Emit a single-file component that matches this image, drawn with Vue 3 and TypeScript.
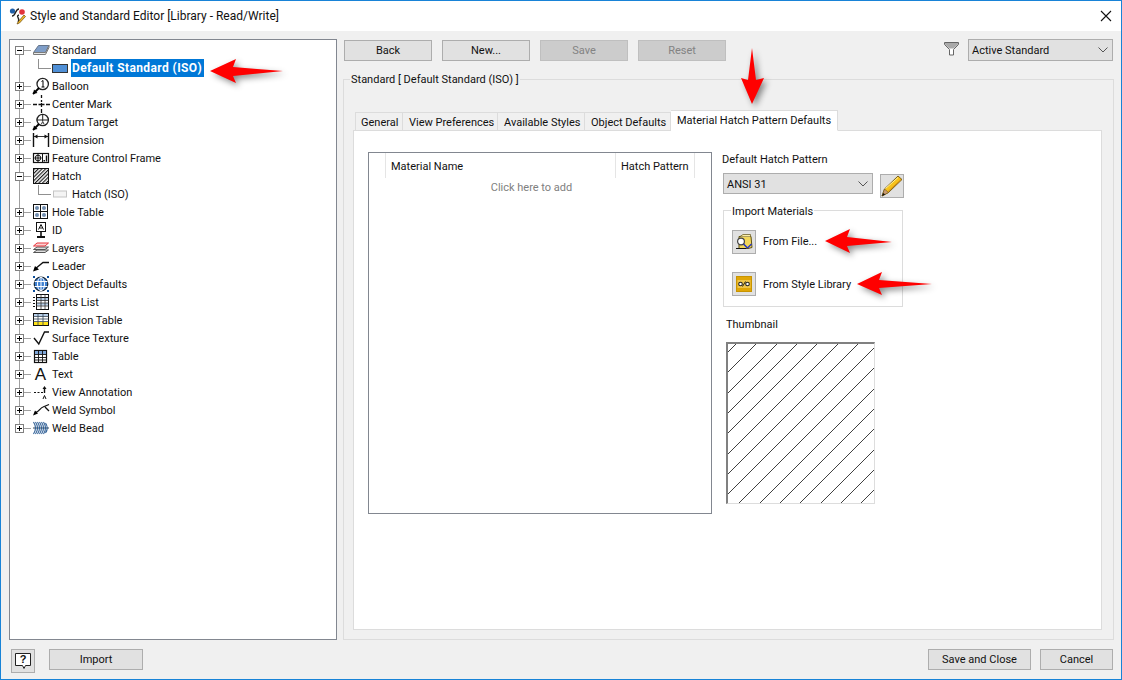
<script setup lang="ts">
interface TreeRow {
  label: string;
  icon: string;
  level?: number;
  toggle?: "plus" | "minus";
  selected?: boolean;
}

const icons: Record<string, string> = {
  standard: `<path d="M1.5 11.5 6.5 4.5H17L13.5 11.5Z" fill="#7f9ec8" stroke="#64748a"/><path d="M1.5 11.5V13.5H13.5L17 6.5V4.5L13.5 11.5Z" fill="#e8e8e8" stroke="#7a7a7a"/>`,
  block: `<rect x="0.5" y="5.5" width="15" height="8" fill="#4f8fd6" stroke="#333"/>`,
  balloon: `<circle cx="10.7" cy="7" r="5.7" fill="#fff" stroke="#222" stroke-width="1.3"/><path d="M7 11 1 17" stroke="#000" stroke-width="1.8"/><path d="M1 17 2 12.5 5.5 16Z" fill="#000"/><path d="M9.5 4.5 11 3.5V10M9.5 10H12.5" fill="none" stroke="#000"/>`,
  center: `<path d="M1 9.5H5M6.5 9.5H12.5M14 9.5H18M9.5 0V3M9.5 5V7M9.5 8V12M9.5 14V18" stroke="#111" stroke-width="1.3"/>`,
  datum: `<circle cx="10.7" cy="7" r="5.7" fill="#fff" stroke="#222" stroke-width="1.3"/><path d="M4.5 7H17M10.7 1V8" stroke="#222"/><path d="M7 11 1 17" stroke="#000" stroke-width="1.8"/><path d="M1 17 2 12.5 5.5 16Z" fill="#000"/><path d="M9.5 11 10.7 8.5 12 11" fill="none" stroke="#333"/>`,
  dimension: `<path d="M1.5 2V16M16.5 2V16" stroke="#111" stroke-width="1.4"/><path d="M2 5.5H16" stroke="#333"/><path d="M2 5.5 5.5 3.5V7.5ZM16 5.5 12.5 3.5V7.5Z" fill="#111"/>`,
  frame: `<rect x="1.5" y="4.5" width="15" height="9" fill="#fff" stroke="#111" stroke-width="1.2"/><path d="M10.5 4.5V13.5" stroke="#111"/><circle cx="6" cy="9" r="2.8" fill="none" stroke="#111"/><path d="M2.5 9H9.5M6 5V13" stroke="#111"/><rect x="11.5" y="11" width="1.5" height="1.5" fill="#111"/><path d="M14.5 6.5V12.5" stroke="#111" stroke-width="1.4"/>`,
  hatch: `<defs><pattern id="tree-hatch" width="2.6" height="2.6" patternUnits="userSpaceOnUse" patternTransform="rotate(45)"><rect width="1.2" height="2.6" fill="#222"/></pattern></defs><rect x="1.5" y="1.5" width="15" height="15" fill="url(#tree-hatch)" stroke="#111"/>`,
  hatchItem: `<rect x="1.5" y="6" width="13" height="6" fill="#f4f4f4" stroke="#c4c4c4"/>`,
  hole: `<rect x="1.5" y="1.5" width="14" height="14" fill="#fff" stroke="#111"/><path d="M8.5 1.5V15.5M1.5 8.5H15.5" stroke="#111"/><circle cx="5" cy="5" r="2" fill="#6f8cae"/><circle cx="12" cy="5" r="2" fill="#6f8cae"/><circle cx="5" cy="12" r="2" fill="#6f8cae"/><circle cx="12" cy="12" r="2" fill="#6f8cae"/>`,
  id: `<rect x="4.5" y="1.5" width="9" height="9" fill="#fff" stroke="#111"/><path d="M6.5 8.5 9 3.5 11.5 8.5M7.5 7H10.5" fill="none" stroke="#111"/><path d="M9 11V15" stroke="#111" stroke-width="1.6"/><path d="M5 16H13" stroke="#111" stroke-width="2"/>`,
  layers: `<path d="M1.5 13.5 5 11H16.5L13 13.5Z" fill="#ddd" stroke="#555"/><path d="M1.5 10.5 5 8H16.5L13 10.5Z" fill="#ddd" stroke="#555"/><path d="M1.5 7 5 4H16.5L13 7Z" fill="#fbd3d3" stroke="#e8343c"/>`,
  leader: `<path d="M3 12 11 5.5H17" fill="none" stroke="#111" stroke-width="1.3"/><path d="M1 14.5 3 9 7 12.5Z" fill="#000"/>`,
  globe: `<circle cx="9" cy="9" r="6.8" fill="#3d7fd1" stroke="#123" stroke-width="1.2"/><path d="M2.5 6.5H15.5M2.5 11.5H15.5M9 2.2V15.8" stroke="#fff"/><ellipse cx="9" cy="9" rx="3.5" ry="6.8" fill="none" stroke="#fff"/><path d="M1 1h2v2H1zM15 1h2v2h-2zM1 15h2v2H1zM15 15h2v2h-2z" fill="#0b4f9e"/>`,
  parts: `<rect x="4.5" y="1.5" width="12" height="15" fill="#fff" stroke="#111"/><path d="M4.5 4.5H16.5" stroke="#111"/><rect x="5" y="5" width="11" height="2.5" fill="#b8d0ea"/><rect x="5" y="10" width="11" height="2.5" fill="#b8d0ea"/><path d="M4.5 7.5H16.5M4.5 10H16.5M4.5 13H16.5M9 1.5V16.5M13 1.5V16.5" stroke="#333" stroke-width="0.8"/><path d="M1 4.5H3M1 7.5H3M1 10.5H3M1 13.5H3" stroke="#111"/>`,
  revision: `<rect x="1.5" y="2.5" width="15" height="12" fill="#fff" stroke="#111"/><rect x="2" y="11" width="14" height="3" fill="#ffe21a"/><rect x="2" y="3" width="14" height="2" fill="#b8d0ea"/><path d="M1.5 5.5H16.5M1.5 8H16.5M1.5 10.5H16.5M6 2.5V14.5M11 2.5V14.5" stroke="#345" stroke-width="0.8"/>`,
  surface: `<path d="M2 9 6.8 15 12.5 3H17" fill="none" stroke="#111" stroke-width="1.4"/>`,
  table: `<rect x="2.5" y="3.5" width="12" height="12" fill="#fff" stroke="#111" stroke-width="1.2"/><rect x="3" y="4" width="11" height="3" fill="#7ea6d8"/><path d="M3 7.5H14.5M3 10.5H14.5M3 13H14.5M6.5 3.5V15.5M10.5 3.5V15.5" stroke="#111" stroke-width="0.9"/>`,
  text: `<text x="8.5" y="15" text-anchor="middle" font-family="Liberation Sans, sans-serif" font-size="17" fill="#111">A</text>`,
  annotation: `<path d="M2 9.5H4M5.5 9.5H7.5M9 9.5H11" stroke="#111"/><path d="M12.5 10V5" stroke="#111" stroke-width="1.4"/><path d="M12.5 3 10.5 6H14.5Z" fill="#111"/><path d="M11 16 12.5 12.5 14 16" fill="none" stroke="#111"/>`,
  weld: `<path d="M3 12C7 11 8 7 11 6L17 3.5M13 6 17 10" fill="none" stroke="#111" stroke-width="1.3"/><path d="M1 14.5 3 9.5 6 12.5Z" fill="#000"/>`,
  bead: `<path d="M1 9H17" stroke="#345"/><path d="M1.5 3Q5.5 9 1.5 15M3.5 3Q7.5 9 3.5 15M5.5 3Q9.5 9 5.5 15M7.5 3Q11.5 9 7.5 15M9.5 3Q13.5 9 9.5 15M11.5 3Q15.5 9 11.5 15M13.5 4Q17 9 13.5 14" fill="none" stroke="#2f5f96" stroke-width="1.1"/>`,
};

const rows: TreeRow[] = [
  { label: "Standard", icon: "standard", toggle: "minus" },
  { label: "Default Standard (ISO)", icon: "block", level: 1, selected: true },
  { label: "Balloon", icon: "balloon", toggle: "plus" },
  { label: "Center Mark", icon: "center", toggle: "plus" },
  { label: "Datum Target", icon: "datum", toggle: "plus" },
  { label: "Dimension", icon: "dimension", toggle: "plus" },
  { label: "Feature Control Frame", icon: "frame", toggle: "plus" },
  { label: "Hatch", icon: "hatch", toggle: "minus" },
  { label: "Hatch (ISO)", icon: "hatchItem", level: 1 },
  { label: "Hole Table", icon: "hole", toggle: "plus" },
  { label: "ID", icon: "id", toggle: "plus" },
  { label: "Layers", icon: "layers", toggle: "plus" },
  { label: "Leader", icon: "leader", toggle: "plus" },
  { label: "Object Defaults", icon: "globe", toggle: "plus" },
  { label: "Parts List", icon: "parts", toggle: "plus" },
  { label: "Revision Table", icon: "revision", toggle: "plus" },
  { label: "Surface Texture", icon: "surface", toggle: "plus" },
  { label: "Table", icon: "table", toggle: "plus" },
  { label: "Text", icon: "text", toggle: "plus" },
  { label: "View Annotation", icon: "annotation", toggle: "plus" },
  { label: "Weld Symbol", icon: "weld", toggle: "plus" },
  { label: "Weld Bead", icon: "bead", toggle: "plus" },
];

const tabs = ["General", "View Preferences", "Available Styles", "Object Defaults", "Material Hatch Pattern Defaults"];

// 45 degree lines of the thumbnail, about 20px apart
const hatchLines = Array.from({ length: 15 }, (_, i) => Math.round(8 + i * 20.3));

const arrows = [
  "M210 71 236 59 233 67 283 71 233 76 236 83Z",
  "M752 104 741 78 748 80 752 48 756 80 764 78Z",
  "M825 241 850 229 847 237 892 242 847 246 850 253Z",
  "M857 284 882 272 879 280 932 284 879 288 882 295Z",
];
</script>

<template>
  <div class="window">
    <header class="titlebar">
      <svg class="app-icon" width="18" height="18" viewBox="0 0 18 18">
        <circle cx="3.5" cy="4" r="2.6" fill="#1f5fa8" />
        <circle cx="13" cy="5" r="2.8" fill="#e2343c" />
        <path d="M3 9C7 9 6 2 10 2M10 8C6 9 12 12 9 15" fill="none" stroke="#222" stroke-width="1.4" />
        <path d="M15 8 9 15 8 17 10.5 16 16.5 9.5Z" fill="#f1b928" stroke="#6a4a10" stroke-width="0.7" />
      </svg>
      <span class="title">Style and Standard Editor [Library - Read/Write]</span>
      <svg class="close" width="12" height="12" viewBox="0 0 12 12">
        <path d="M1 1 11 11M11 1 1 11" stroke="#111" stroke-width="1.1" />
      </svg>
    </header>

    <div class="body">
      <div class="tree">
        <div
          v-for="(row, i) in rows"
          :key="row.label"
          class="row"
          :class="{ child: row.level, first: i === 0, last: i === rows.length - 1 }"
        >
          <span class="toggle-cell">
            <span v-if="row.toggle" class="toggle" :class="row.toggle"></span>
          </span>
          <svg class="row-icon" width="18" height="18" viewBox="0 0 18 18" v-html="icons[row.icon]"></svg>
          <span class="row-label" :class="{ selected: row.selected }">{{ row.label }}</span>
        </div>
      </div>

      <div class="editor">
        <div class="toolbar">
          <button class="btn wide">Back</button>
          <button class="btn wide">New...</button>
          <button class="btn wide disabled">Save</button>
          <button class="btn wide disabled">Reset</button>
          <svg class="funnel" width="15" height="14" viewBox="0 0 15 14">
            <path d="M.5.5H14.5V2.5L9.5 7.5V13H5.5V7.5L.5 2.5Z" fill="#fff" stroke="#666" />
            <path d="M1 1H14V2.5L9.5 6.5H5.5L1 2.5Z" fill="#a9a9a9" />
          </svg>
          <div class="combo filter-combo">
            <span>Active Standard</span>
            <svg width="10" height="6" viewBox="0 0 10 6"><path d="M.5.5 5 5 9.5.5" fill="none" stroke="#555" /></svg>
          </div>
        </div>

        <fieldset class="group">
          <legend>Standard [ Default Standard (ISO) ]</legend>
          <div class="tabs">
            <div
              v-for="(tab, i) in tabs"
              :key="tab"
              class="tab"
              :class="{ active: i === tabs.length - 1 }"
            >{{ tab }}</div>
          </div>

          <div class="tab-panel">
            <div class="materials">
              <div class="materials-head">
                <div class="col col-mark"></div>
                <div class="col col-name">Material Name</div>
                <div class="col col-pattern">Hatch Pattern</div>
              </div>
              <div class="add-row">Click here to add</div>
            </div>

            <div class="side">
              <div class="side-label">Default Hatch Pattern</div>
              <div class="pattern-row">
                <div class="combo pattern-combo">
                  <span>ANSI 31</span>
                  <svg width="10" height="6" viewBox="0 0 10 6"><path d="M.5.5 5 5 9.5.5" fill="none" stroke="#555" /></svg>
                </div>
                <button class="icon-btn pencil">
                  <svg width="22" height="22" viewBox="0 0 22 22">
                    <path d="M17 1 21 4.5 7.5 17.5 1 21 3.5 14Z" fill="#f6c21c" stroke="#6e5410" stroke-width="0.9" />
                    <path d="M3.5 14 7.5 17.5 1 21Z" fill="#c99a72" stroke="#6e5410" stroke-width="0.6" />
                    <path d="M2.2 18 1 21 4.2 19.6Z" fill="#111" />
                    <path d="M4.5 13.5 17 2.5" stroke="#fff2a0" />
                    <path d="M7 16.5 20 4.5" stroke="#d98f10" />
                  </svg>
                </button>
              </div>

              <fieldset class="import">
                <legend>Import Materials</legend>
                <div class="import-row">
                  <button class="icon-btn">
                    <svg width="18" height="18" viewBox="0 0 18 18">
                      <path d="M4 3.5H16L17 14.5 13 15.5H4Z" fill="#f2d75a" stroke="#5e5014" />
                      <path d="M5 3.5 8 1.5H15.5V3.5" fill="#fbeea8" stroke="#5e5014" stroke-width="0.7" />
                      <circle cx="6" cy="8.5" r="3.4" fill="#fff" stroke="#444" stroke-width="1.2" />
                      <path d="M8.5 11 12.5 15" stroke="#1d2fc4" stroke-width="1.5" />
                      <path d="M12.5 15 16.5 11" stroke="#1d2fc4" stroke-width="1.2" />
                      <path d="M1 15.5H11" stroke="#111" />
                    </svg>
                  </button>
                  <span>From File...</span>
                </div>
                <div class="import-row">
                  <button class="icon-btn">
                    <svg width="16" height="16" viewBox="0 0 16 16">
                      <rect x="0.5" y="0.5" width="15" height="15" fill="#e0a606" stroke="#c89400" />
                      <rect x="1.5" y="4" width="13" height="8" fill="#efc64a" />
                      <circle cx="4.5" cy="8" r="1.8" fill="#fff" stroke="#222" stroke-width="1.1" />
                      <circle cx="11.5" cy="8" r="1.8" fill="#fff" stroke="#222" stroke-width="1.1" />
                      <path d="M6.5 10.5 9.5 5.5" stroke="#222" />
                    </svg>
                  </button>
                  <span>From Style Library</span>
                </div>
              </fieldset>

              <div class="thumb-label">Thumbnail</div>
              <svg class="thumb" width="149" height="162" viewBox="0 0 146 159" shape-rendering="crispEdges">
                <g stroke="#000" stroke-width="0.75">
                  <line
                    v-for="sum in hatchLines"
                    :key="sum"
                    x1="0"
                    :y1="sum"
                    :x2="sum"
                    y2="0"
                  />
                </g>
              </svg>
            </div>
          </div>
        </fieldset>
      </div>
    </div>

    <footer class="footer">
      <button class="icon-btn help">
        <svg width="18" height="18" viewBox="0 0 18 18">
          <path d="M1.5 1.5H16.5V13.5H11.5L10 16.5 8.5 13.5H1.5Z" fill="#fff" stroke="#222" />
          <text x="9" y="11" text-anchor="middle" font-family="Liberation Sans, sans-serif" font-size="11" font-weight="700" fill="#111">?</text>
        </svg>
      </button>
      <button class="btn import-btn">Import</button>
      <div class="spacer"></div>
      <button class="btn save-btn">Save and Close</button>
      <button class="btn cancel-btn">Cancel</button>
    </footer>

    <svg class="arrows" width="1122" height="680" viewBox="0 0 1122 680">
      <path v-for="d in arrows" :key="d" :d="d" fill="#ff0000" />
    </svg>
  </div>
</template>

<style>
html, body { margin: 0; background: #f0f0f0; }
</style>

<style scoped>
.window { position: relative; box-sizing: border-box; width: 1122px; height: 680px; display: flex; flex-direction: column; background: #f0f0f0; border: 1px solid #1883d7; font-family: Roboto, "Liberation Sans", sans-serif; font-size: 11px; line-height: 16px; color: #111; overflow: hidden; }
.titlebar { height: 30px; flex: none; display: flex; align-items: center; background: #fff; padding: 0 9px 0 8px; font-size: 12px; }
.app-icon { flex: none; margin-right: 3px; }
.title { flex: 1; color: #111; }
.body { flex: 1; min-height: 0; display: flex; padding: 8px 8px 0; gap: 7px; }
.tree { box-sizing: border-box; width: 328px; height: 601px; flex: none; background: #fff; border: 1px solid #828790; padding-top: 1px; }
.row { position: relative; height: 18px; display: flex; align-items: center; }
.row::before { content: ""; position: absolute; left: 9px; top: 0; bottom: 0; width: 1px; background: #a0a0a0; }
.row.first::before { top: 9px; }
.row.last::before { bottom: 9px; }
.row.child { padding-left: 20px; }
.row.child::after { content: ""; position: absolute; left: 28px; top: 0; width: 12px; height: 9px; border-left: 1px solid #909090; border-bottom: 1px solid #909090; }
.toggle-cell { position: relative; width: 22px; height: 18px; flex: none; }
.toggle-cell:has(.toggle)::after { content: ""; position: absolute; left: 14px; top: 9px; width: 7px; height: 1px; background: #a0a0a0; }
.toggle { position: absolute; z-index: 1; left: 5px; top: 5px; box-sizing: border-box; width: 9px; height: 9px; border: 1px solid #808080; background: #fff; }
.toggle::before { content: ""; position: absolute; left: 1px; top: 3px; width: 5px; height: 1px; background: #000; }
.toggle.plus::after { content: ""; position: absolute; left: 3px; top: 1px; width: 1px; height: 5px; background: #000; }
.row-icon { flex: none; }
.row-label { margin-left: 1px; padding: 0 1px; height: 18px; line-height: 20px; white-space: nowrap; }
.row-label.selected { background: #0078d7; color: #fff; font-size: 12px; font-weight: 700; letter-spacing: 0.4px; padding-right: 2px; line-height: 18px; }
.editor { flex: 1; min-width: 0; display: flex; flex-direction: column; }
.toolbar { display: flex; align-items: flex-start; height: 32px; flex: none; }
.btn { box-sizing: border-box; height: 21px; padding: 1px 0 0; background: #e1e1e1; border: 1px solid #adadad; font: inherit; color: #111; white-space: nowrap; }
.btn.disabled { background: #ccc; border-color: #bfbfbf; color: #838383; }
.toolbar .btn { margin-right: 10px; margin-top: 1px; }
.wide { width: 88px; }
.funnel { margin: 3px 9px 0 auto; }
.combo { box-sizing: border-box; height: 22px; display: flex; align-items: center; justify-content: space-between; padding: 0 4px 0 3px; background: #e1e1e1; border: 1px solid #adadad; }
.combo span { padding-top: 2px; }
.filter-combo { width: 145px; }
.group { flex: 1; min-height: 0; min-width: 0; margin: 0 -1px 0 -1px; padding: 23px 11px 9px 9px; border: 1px solid #dcdcdc; display: flex; flex-direction: column; }
.group legend { margin-left: -3px; padding: 0 1px; height: 16px; line-height: 18px; }
.tabs { position: relative; z-index: 1; display: flex; align-items: flex-end; height: 21px; flex: none; padding-left: 2px; }
.tab { box-sizing: border-box; height: 19px; line-height: 20px; padding-left: 6px; white-space: nowrap; background: #f0f0f0; border: 1px solid #dcdcdc; border-left-width: 0; }
.tab:nth-child(1) { width: 48px; border-left-width: 1px; padding-left: 5px; }
.tab:nth-child(2) { width: 95px; }
.tab:nth-child(3) { width: 87px; }
.tab:nth-child(4) { width: 86px; }
.tab.active { width: 167px; height: 21px; line-height: 19px; background: #fff; border-bottom-color: #fff; }
.tab-panel { flex: 1; min-height: 0; margin-top: -1px; display: flex; align-items: flex-start; padding: 21px 0 0 14px; background: #fff; border: 1px solid #dcdcdc; }
.materials { box-sizing: border-box; width: 344px; height: 362px; flex: none; border: 1px solid #828790; }
.materials-head { display: flex; height: 25px; }
.col { border-right: 1px solid #e5e5e5; padding-left: 5px; line-height: 28px; box-sizing: border-box; white-space: nowrap; }
.col-mark { width: 17px; padding: 0; }
.col-name { width: 230px; }
.col-pattern { width: 79px; }
.add-row { width: 325px; text-align: center; margin-top: 2px; color: #808080; }
.side { margin-left: 10px; display: flex; flex-direction: column; align-items: flex-start; }
.side-label { height: 15px; padding-top: 0; }
.pattern-row { display: flex; align-items: flex-start; margin: 6px 0 0 1px; }
.pattern-combo { width: 150px; height: 21px; }
.icon-btn { box-sizing: border-box; width: 24px; height: 24px; padding: 0; display: flex; align-items: center; justify-content: center; background: #e1e1e1; border: 1px solid #adadad; }
.pencil { margin: 1px 0 0 7px; }
.import { box-sizing: border-box; width: 180px; height: 105px; margin: 4px 0 0 1px; padding: 12px 0 0 8px; border: 1px solid #dcdcdc; }
.import legend { margin-left: -1px; padding: 0 1px; height: 16px; line-height: 20px; }
.import-row { display: flex; align-items: center; gap: 7px; height: 24px; margin-bottom: 18px; }
.import-row + .import-row span { padding-top: 2px; }
.thumb-label { margin: 10px 0 0 4px; }
.thumb { display: block; margin: 9px 0 0 4px; box-sizing: border-box; border-style: solid; border-width: 2px 1px 1px 2px; border-color: #808080 #ddd #ddd #808080; }
.footer { display: flex; align-items: flex-start; height: 30px; flex: none; padding: 9px 8px 0 10px; }
.help { width: 24px; margin-right: 14px; }
.import-btn { width: 94px; }
.spacer { flex: 1; }
.save-btn { width: 103px; margin-right: 9px; }
.cancel-btn { width: 73px; }
.arrows { position: absolute; left: -1px; top: -1px; pointer-events: none; filter: drop-shadow(3px 3px 3px rgba(0, 0, 0, 0.45)); }
</style>
